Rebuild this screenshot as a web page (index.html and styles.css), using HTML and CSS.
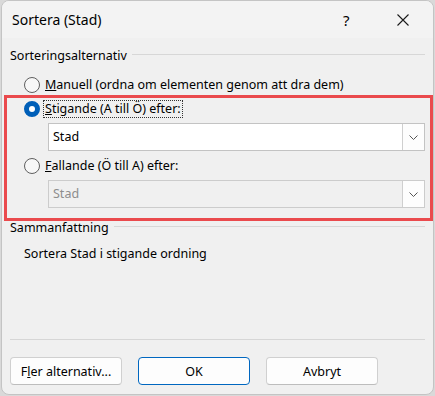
FILE: index.html
```html
<!DOCTYPE html>
<html lang="sv">
<head>
    <meta charset="UTF-8">
    <meta name="viewport" content="width=device-width, initial-scale=1.0">
    <title>Sortera (Stad)</title>
    <link rel="stylesheet" href="styles.css">
</head>
<body>
    <div class="dialog">
        <div class="titlebar">
            <span class="title">Sortera (Stad)</span>
            <span class="help">?</span>
            <span class="close">
                <svg width="12" height="12" viewBox="0 0 12 12">
                    <path d="M0.5 0.5 L11.5 11.5 M11.5 0.5 L0.5 11.5" stroke="#1a1a1a" stroke-width="1.1" fill="none"/>
                </svg>
            </span>
        </div>

        <div class="content">
            <div class="group-head">
                <span>Sorteringsalternativ</span>
                <span class="rule"></span>
            </div>

            <label class="radio first">
                <span class="dot"></span>
                <span><u>M</u>anuell (ordna om elementen genom att dra dem)</span>
            </label>

            <div class="highlight">
                <label class="radio">
                    <span class="dot checked"></span>
                    <span class="focus"><u>S</u>tigande (A till Ö) efter:</span>
                </label>
                <div class="select">
                    <span class="value">Stad</span>
                    <span class="arrow">
                        <svg width="9" height="5" viewBox="0 0 9 5">
                            <path d="M0.5 0.5 L4.5 4.5 L8.5 0.5" stroke="#555" stroke-width="1" fill="none"/>
                        </svg>
                    </span>
                </div>

                <label class="radio third">
                    <span class="dot"></span>
                    <span><u>F</u>allande (Ö till A) efter:</span>
                </label>
                <div class="select disabled">
                    <span class="value">Stad</span>
                    <span class="arrow">
                        <svg width="9" height="5" viewBox="0 0 9 5">
                            <path d="M0.5 0.5 L4.5 4.5 L8.5 0.5" stroke="#555" stroke-width="1" fill="none"/>
                        </svg>
                    </span>
                </div>
            </div>

            <div class="group-head summary-head">
                <span>Sammanfattning</span>
                <span class="rule"></span>
            </div>
            <p class="summary">Sortera Stad i stigande ordning</p>

            <div class="separator"></div>

            <div class="buttons">
                <button type="button">F<u>l</u>er alternativ...</button>
                <button type="button" class="default">OK</button>
                <button type="button">Avbryt</button>
            </div>
        </div>
    </div>
</body>
</html>
```

FILE: styles.css
```css
* {
    box-sizing: border-box;
}

body {
    margin: 0;
    background-color: #d9d9d9;
    font-family: "Noto Sans", "DejaVu Sans", sans-serif;
    font-size: 12.5px;
    color: #000;
}

.dialog {
    width: 433px;
    height: 395px;
    margin-left: 1px;
    border: 1px solid #c4c4c4;
    border-radius: 8px;
    background-color: #f0f0f0;
    overflow: hidden;
}

.titlebar {
    display: flex;
    align-items: center;
    height: 37px;
    padding-left: 10px;
    background-color: #f3f3f3;
}

.title {
    font-size: 14px;
    flex: 1;
}

.help {
    font-size: 15px;
    width: 54px;
}

.close {
    display: flex;
    width: 36px;
}

.content {
    padding: 0 8px;
}

.group-head {
    display: flex;
    height: 16px;
    line-height: 16px;
    margin-top: 10px;
}

.group-head .rule {
    flex: 1;
    height: 1px;
    margin: 6px 0 0 5px;
    background-color: #d7d7d7;
}

.radio {
    display: flex;
    align-items: center;
    gap: 5px;
    height: 16px;
    line-height: 16px;
    margin-left: 14px;
}

.radio.first {
    margin-top: 13px;
}

.radio.third {
    margin-top: 7px;
}

.dot {
    width: 16px;
    height: 16px;
    border: 1px solid #5f5f5f;
    border-radius: 50%;
    background-color: #f7f7f7;
}

.dot.checked {
    border: 5px solid #005fb8;
    background-color: #fff;
}

.focus {
    height: 18px;
    line-height: 16px;
    padding: 0 1px;
    margin-left: -2px;
    border: 1px dotted #333;
}

.highlight {
    margin: 2px -8px 0 -6px;
    padding: 3px 5px 10px 3px;
    border: 3px solid #ea4a4d;
}

.select {
    display: flex;
    height: 28px;
    margin: 6px 0 0 38px;
    border: 1px solid #c3c3c3;
    background-color: #fff;
}

.select .value {
    flex: 1;
    padding-left: 4px;
    line-height: 26px;
}

.select .arrow {
    display: flex;
    align-items: center;
    justify-content: center;
    width: 22px;
    border-left: 1px solid #cfcfcf;
    background-color: #fdfdfd;
}

.select.disabled {
    margin-top: 6px;
    background-color: #f0f0f0;
    border-color: #cccccc;
}

.select.disabled .value {
    color: #8d8d8d;
}

.summary-head {
    margin-top: -1px;
}

.summary-head .rule {
    margin-top: 6px;
}

.summary {
    margin: 10px 0 0 14px;
    line-height: 16px;
}

.separator {
    height: 1px;
    margin-top: 77px;
    background-color: #d6d6d6;
}

.buttons {
    display: flex;
    gap: 16px;
    margin-top: 17px;
}

.buttons button {
    width: 112px;
    height: 28px;
    border: 1px solid #d0d0d0;
    border-bottom-color: #bdbdbd;
    border-radius: 4px;
    background-color: #fdfdfd;
    font-family: inherit;
    font-size: 12.5px;
    color: #000;
}

.buttons button.default {
    border: 1px solid #0067c0;
}
```
